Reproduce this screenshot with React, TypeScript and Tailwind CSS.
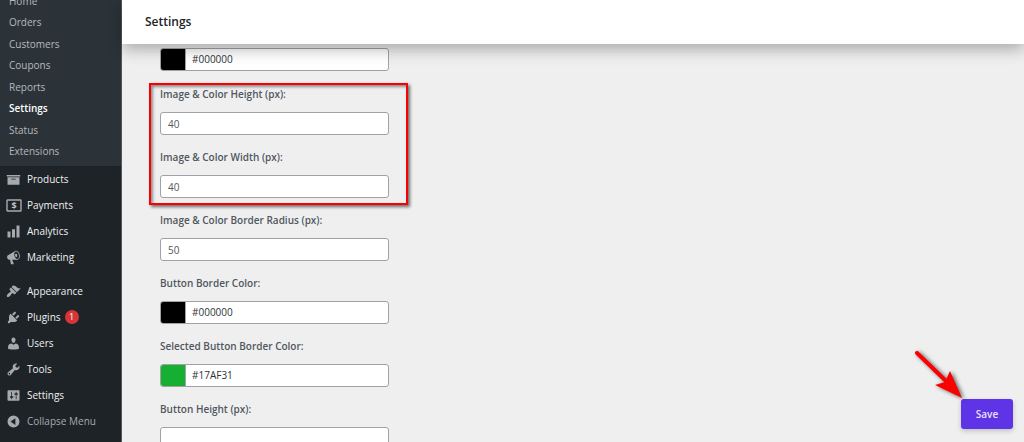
import { useState } from "react";
import type { ReactNode } from "react";

interface MenuEntry {
  label: string;
  icon: ReactNode;
  badge?: number;
}

interface FieldProps {
  id: string;
  label?: string;
  initial: string;
}

const SUBMENU = ["Home", "Orders", "Customers", "Coupons", "Reports", "Settings", "Status", "Extensions"];

function Glyph({ d }: { d: string }) {
  return (
    <svg viewBox="0 0 20 20" className="size-[15px] fill-[#a7aaad]" fillRule="evenodd" aria-hidden="true">
      <path d={d} />
    </svg>
  );
}

function PaymentsIcon() {
  return (
    <svg viewBox="0 0 16 13" className="h-[13px] w-4" aria-hidden="true">
      <rect x="1" y="1" width="14" height="11" rx="0.5" fill="none" stroke="#a7aaad" strokeWidth="1.4" />
      <text x="8" y="10" textAnchor="middle" fontSize="9" fontWeight="700" fill="#c3c4c7">
        $
      </text>
    </svg>
  );
}

const STORE_MENU: MenuEntry[] = [
  { label: "Products", icon: <Glyph d="M19 4v2H1V4h18zM2 7h16v10H2V7zm11 3V9H7v1h6z" /> },
  { label: "Payments", icon: <PaymentsIcon /> },
  { label: "Analytics", icon: <Glyph d="M18 18V2h-4v16h4zm-6 0V7H8v11h4zm-6 0v-8H2v8h4z" /> },
  {
    label: "Marketing",
    icon: (
      <Glyph d="M18.15 5.94c.46 1.62.38 3.22-.02 4.48-.42 1.28-1.26 2.18-2.3 2.48-.16.06-.26.06-.4.06-.06.02-.12.02-.18.02-.06.02-.14.02-.22.02h-6.8l2.22 5.5c.02.14-.06.26-.14.34-.08.1-.24.16-.34.16H6.95c-.1 0-.26-.06-.34-.16-.08-.08-.16-.2-.14-.34l-1-5.5H4.25l-.02-.02c-.5.06-1.08-.18-1.54-.62s-.88-1.08-1.06-1.88c-.24-.8-.2-1.56-.02-2.2.18-.62.58-1.08 1.06-1.3l.02-.02 9-5.4c.1-.06.18-.1.24-.16.06-.04.14-.08.24-.12.16-.08.28-.12.5-.18 1.04-.3 2.24.1 3.22.98s1.84 2.24 2.26 3.86zm-2.58 5.98h-.02c.4-.1.74-.34 1.04-.7.58-.7.86-1.76.86-3.04 0-.64-.1-1.3-.28-1.98-.34-1.36-1.02-2.5-1.78-3.24s-1.68-1.1-2.46-.88c-.82.22-1.4.96-1.7 2-.32 1.04-.28 2.36.06 3.72.38 1.36 1 2.5 1.8 3.24.78.74 1.62 1.1 2.48.88zm-2.54-7.08c.22-.04.42-.02.62.04.38.16.76.48 1.02 1s.42 1.2.42 1.78c0 .3-.04.56-.12.8-.18.48-.44.84-.86.94-.34.1-.8-.06-1.14-.4s-.64-.86-.78-1.5c-.18-.62-.12-1.24.02-1.72s.48-.84.82-.94z" />
    ),
  },
];

const ADMIN_MENU: MenuEntry[] = [
  {
    label: "Appearance",
    icon: (
      <Glyph d="M14.48 11.06L7.41 3.99l1.5-1.5c.5-.56 2.3-.47 3.51.32 1.21.8 1.43 1.28 2.91 2.1 1.18.64 2.45 1.26 4.45.85zm-.71.71L6.7 4.7 4.93 6.47c-.39.39-.39 1.02 0 1.41l1.06 1.06c.39.39.39 1.03 0 1.42-.6.6-1.43 1.11-2.21 1.69-.35.26-.7.53-1.01.84C1.43 14.23.4 16.08 1.4 17.07c.99 1 2.84-.03 4.18-1.36.31-.31.58-.66.85-1.02.57-.78 1.08-1.61 1.69-2.21.39-.39 1.02-.39 1.41 0l1.06 1.06c.39.39 1.02.39 1.41 0z" />
    ),
  },
  {
    label: "Plugins",
    badge: 1,
    icon: (
      <Glyph d="M13.11 4.36L9.87 7.6 8 5.73l3.24-3.24c.35-.34 1.05-.2 1.56.32.52.51.66 1.21.31 1.55zm-8 1.77l.91-1.12 9.01 9.01-1.19.84c-.71.71-2.63 1.16-3.82 1.16H6.14L4.9 17.26c-.59.59-1.54.59-2.12 0-.59-.58-.59-1.53 0-2.12l1.24-1.24v-3.88c0-1.13.4-3.19 1.09-3.89zm7.26 3.97l3.24-3.24c.34-.35 1.04-.21 1.55.31.52.51.66 1.21.31 1.55l-3.24 3.25z" />
    ),
  },
  {
    label: "Users",
    icon: (
      <Glyph d="M10 9.25c-2.27 0-2.73-3.44-2.73-3.44C7 4.02 7.82 2 9.97 2c2.16 0 2.98 2.02 2.71 3.81 0 0-.41 3.44-2.68 3.44zm0 2.57L12.72 10c2.39 0 4.52 2.33 4.52 4.53v2.49s-3.65 1.13-7.24 1.13c-3.65 0-7.24-1.13-7.24-1.13v-2.49c0-2.25 1.94-4.48 4.47-4.48z" />
    ),
  },
  {
    label: "Tools",
    icon: (
      <Glyph d="M16.68 9.77c-1.34 1.34-3.3 1.67-4.95.99l-5.41 6.52c-.99.99-2.59.99-3.58 0s-.99-2.59 0-3.57l6.52-5.42c-.68-1.65-.35-3.61.99-4.95 1.28-1.28 3.12-1.62 4.72-1.06l-2.89 2.89 2.82 2.82 2.86-2.87c.53 1.58.18 3.39-1.08 4.65zM3.81 16.21c.4.39 1.04.39 1.43 0 .4-.4.4-1.04 0-1.43-.39-.4-1.03-.4-1.43 0-.39.39-.39 1.03 0 1.43z" />
    ),
  },
  {
    label: "Settings",
    icon: (
      <Glyph d="M18 16V4c0-.55-.45-1-1-1H3c-.55 0-1 .45-1 1v12c0 .55.45 1 1 1h14c.55 0 1-.45 1-1zM8 11h1c.55 0 1 .45 1 1s-.45 1-1 1H8v1.5c0 .28-.22.5-.5.5s-.5-.22-.5-.5V13H6c-.55 0-1-.45-1-1s.45-1 1-1h1V5.5c0-.28.22-.5.5-.5s.5.22.5.5V11zm5-2h-1c-.55 0-1-.45-1-1s.45-1 1-1h1V5.5c0-.28.22-.5.5-.5s.5.22.5.5V7h1c.55 0 1 .45 1 1s-.45 1-1 1h-1v5.5c0 .28-.22.5-.5.5s-.5-.22-.5-.5V9z" />
    ),
  },
];

function MenuList({ entries }: { entries: MenuEntry[] }) {
  return (
    <ul>
      {entries.map((entry) => (
        <li key={entry.label}>
          <a href="#" className="flex h-[26px] items-center text-[10px] font-medium text-[#f0f0f1]">
            <span className="flex w-[27px] justify-center">{entry.icon}</span>
            {entry.label}
            {entry.badge !== undefined && (
              <span className="ml-1 flex size-[14px] items-center justify-center rounded-full bg-[#d63638] text-[9px] text-white">
                {entry.badge}
              </span>
            )}
          </a>
        </li>
      ))}
    </ul>
  );
}

function Sidebar() {
  return (
    <nav className="w-[122px] shrink-0 overflow-hidden border-r border-[#50575e] bg-[#1d2327]">
      <div className="flow-root h-[166px] bg-[#2c3338]">
        {/* the submenu is scrolled partly out of view */}
        <ul className="-mt-[7px] flex h-[166px] flex-col justify-between pl-[9px] text-[10px] leading-4">
          {SUBMENU.map((item) => (
            <li key={item}>
              <a href="#" className={item === "Settings" ? "font-semibold text-white" : "text-[#b4b9be]"}>
                {item}
              </a>
            </li>
          ))}
        </ul>
      </div>
      <div className="flex flex-col gap-2">
        <MenuList entries={STORE_MENU} />
        <MenuList entries={ADMIN_MENU} />
      </div>
      <button type="button" className="flex h-[26px] w-full items-center text-[10px] text-[#a7aaad]">
        <span className="flex w-[27px] justify-center">
          <Glyph d="M10 2a8 8 0 1 0 0 16a8 8 0 1 0 0-16zM12.5 5.5v9L6 10z" />
        </span>
        Collapse Menu
      </button>
    </nav>
  );
}

function FieldLabel({ id, label }: { id: string; label: string }) {
  return (
    <label htmlFor={id} className="mb-[10px] block text-[10px] leading-4 font-semibold text-[#50575e]">
      {label}
    </label>
  );
}

function NumberField({ id, label, initial }: FieldProps) {
  const [value, setValue] = useState(initial);

  return (
    <div>
      {label && <FieldLabel id={id} label={label} />}
      <input
        id={id}
        inputMode="numeric"
        value={value}
        onChange={(e) => setValue(e.target.value)}
        className="block h-[23px] w-full rounded-[3px] border border-[#a0a2a8] bg-white px-[7px] text-[10px] text-[#50575e]"
      />
    </div>
  );
}

function ColorField({ id, label, initial }: FieldProps) {
  const [value, setValue] = useState(initial);

  return (
    <div>
      {label && <FieldLabel id={id} label={label} />}
      <div className="flex h-[23px] overflow-hidden rounded-[3px] border border-[#a0a2a8] bg-white">
        <span className="w-[25px] border-r border-[#a0a2a8]" style={{ backgroundColor: value }} />
        <input
          id={id}
          aria-label={label ?? "Color"}
          value={value}
          onChange={(e) => setValue(e.target.value)}
          className="min-w-0 flex-1 px-[6px] text-[10px] text-[#2c3338]"
        />
      </div>
    </div>
  );
}

function Highlight() {
  return (
    <div className="pointer-events-none absolute -top-[3px] -right-[19px] -bottom-[7px] -left-[11px] border-2 border-[#fb0000] shadow-[2px_2px_3px_rgba(0,0,0,0.55),inset_2px_2px_3px_rgba(0,0,0,0.4)]" />
  );
}

function SaveArrow() {
  return (
    <svg
      viewBox="0 0 56 56"
      className="pointer-events-none absolute right-[50px] bottom-[27px] size-14 overflow-visible drop-shadow-[2px_1px_2px_rgba(0,0,0,0.6)]"
      aria-hidden="true"
    >
      <path d="M10 7L40 36" stroke="#fb0000" strokeWidth="4" strokeLinecap="round" />
      <path d="M55 52L28 39L38 36L43 25Z" fill="#fb0000" />
    </svg>
  );
}

export default function App() {
  return (
    <div className="flex h-screen overflow-hidden bg-[#efefef] font-['Open_Sans','Noto_Sans',sans-serif]">
      <Sidebar />
      <div className="relative flex min-w-0 flex-1 flex-col">
        <header className="relative flex h-11 shrink-0 items-center bg-white px-[23px] shadow-[0_5px_16px_rgba(0,0,0,0.3)]">
          <h1 className="text-xs font-semibold text-[#1d2327]">Settings</h1>
        </header>
        <main className="min-h-0 flex-1 overflow-hidden pt-1 pl-[38px]">
          <form className="flex w-[229px] flex-col gap-[14px]">
            <ColorField id="selected-color" initial="#000000" />
            <div className="relative mt-px flex flex-col gap-[14px]">
              <NumberField id="swatch-height" label="Image & Color Height (px):" initial="40" />
              <NumberField id="swatch-width" label="Image & Color Width (px):" initial="40" />
              <Highlight />
            </div>
            <NumberField id="swatch-radius" label="Image & Color Border Radius (px):" initial="50" />
            <ColorField id="border-color" label="Button Border Color:" initial="#000000" />
            <ColorField id="selected-border-color" label="Selected Button Border Color:" initial="#17AF31" />
            <NumberField id="button-height" label="Button Height (px):" initial="" />
          </form>
        </main>
        <div className="absolute right-[11px] bottom-[13px]">
          <button
            type="button"
            className="h-[30px] w-[52px] rounded-[3px] bg-[#5f33e6] text-[10px] font-semibold text-[#e9e3fc] shadow-[0_2px_5px_rgba(0,0,0,0.2)]"
          >
            Save
          </button>
          <SaveArrow />
        </div>
      </div>
    </div>
  );
}
